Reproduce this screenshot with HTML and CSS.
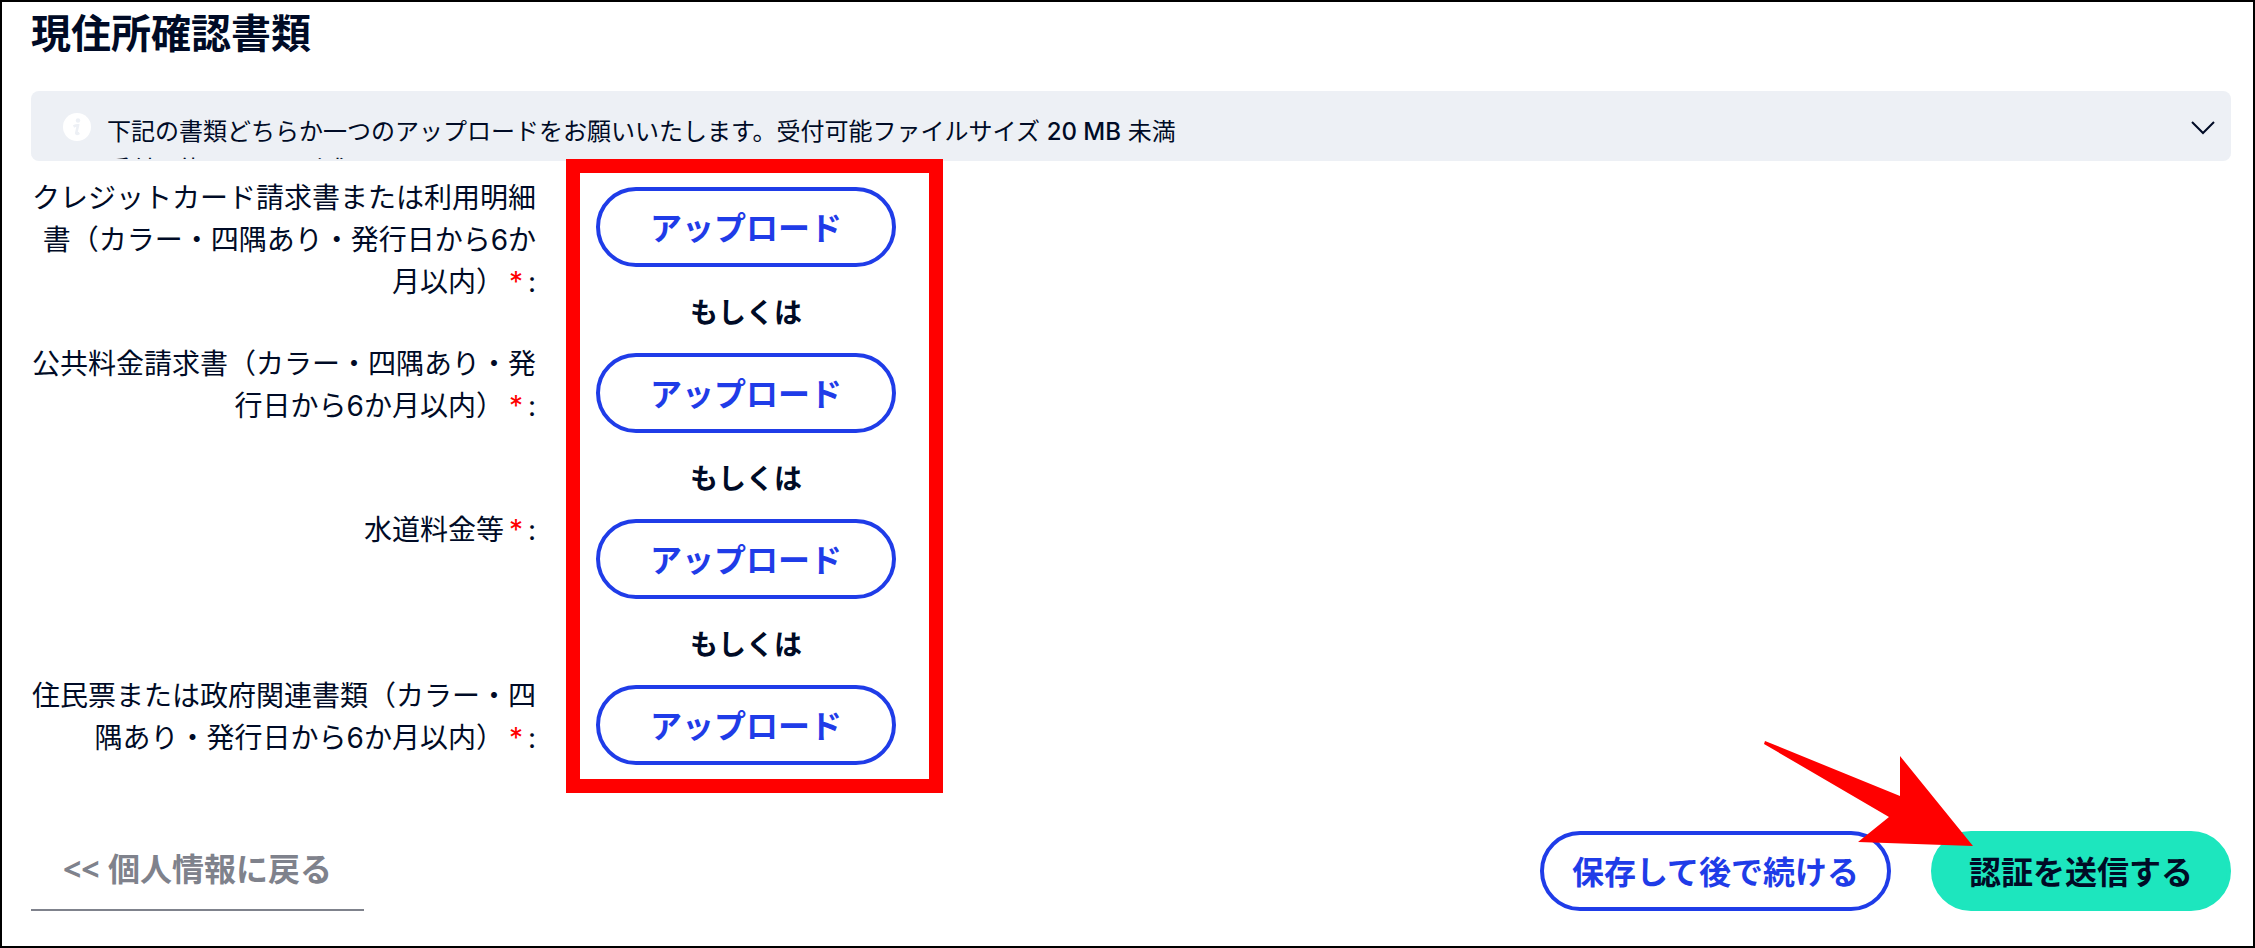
FILE: index.html
```html
<!DOCTYPE html>
<html lang="ja">
<head>
    <meta charset="UTF-8">
    <title>現住所確認書類</title>
    <link rel="stylesheet" href="styles.css">
</head>
<body>

<div class="container">
    <h1>現住所確認書類</h1>

    <div class="notice">
        <svg class="info-icon" viewBox="0 0 28 28" aria-hidden="true">
            <circle cx="14" cy="14" r="14" fill="#fff"/>
            <circle cx="15" cy="7.500" r="2.200" fill="#edf0f5"/>
            <path d="M10.500 13.500c2-1 3.500-1.300 4.500-1.200l-1.700 7.500c-.3 1.500 1 1.300 3 0" fill="none" stroke="#edf0f5" stroke-width="2.600"/>
        </svg>
        <div class="notice-text">
            下記の書類どちらか一つのアップロードをお願いいたします。受付可能ファイルサイズ <span class="size">20 MB</span> 未満<br>
            受付可能ファイル形式
        </div>
        <button class="toggle" type="button" aria-label="詳細を表示">
            <svg viewBox="0 0 24 14"><path d="M1 1l11 11L23 1"/></svg>
        </button>
    </div>

    <form class="documents">
        <div class="row">
            <label for="creditCard">クレジットカード請求書または利用明細書（カラー・四隅あり・発行日から6か月以内）<span class="required">*</span>:</label>
            <div class="upload">
                <button class="btn" type="button" id="creditCard">アップロード</button>
                <span class="or">もしくは</span>
            </div>
        </div>
        <div class="row">
            <label for="utilityBill">公共料金請求書（カラー・四隅あり・発行日から6か月以内）<span class="required">*</span>:</label>
            <div class="upload">
                <button class="btn" type="button" id="utilityBill">アップロード</button>
                <span class="or">もしくは</span>
            </div>
        </div>
        <div class="row">
            <label for="waterBill">水道料金等<span class="required">*</span>:</label>
            <div class="upload">
                <button class="btn" type="button" id="waterBill">アップロード</button>
                <span class="or">もしくは</span>
            </div>
        </div>
        <div class="row">
            <label for="residence">住民票または政府関連書類（カラー・四隅あり・発行日から6か月以内）<span class="required">*</span>:</label>
            <div class="upload">
                <button class="btn" type="button" id="residence">アップロード</button>
            </div>
        </div>
        <div class="highlight"></div>
    </form>

    <div class="actions">
        <a class="back" href="#">&lt;&lt; 個人情報に戻る</a>
        <div class="buttons">
            <button class="btn save" type="button">保存して後で続ける</button>
            <button class="btn submit" type="submit">認証を送信する</button>
            <svg class="arrow" viewBox="0 0 210 106" aria-hidden="true">
                <path d="M1 0L136 55V15L209 105L94 101L125 76L0 3z" fill="#f00"/>
            </svg>
        </div>
    </div>
</div>

</body>
</html>
```
FILE: styles.css
```css
* {
    box-sizing: border-box;
}
body {
    font-family: Inter, "Noto Sans CJK JP", sans-serif;
    font-size: 28px;
    line-height: 42px;
    color: #000b26;
    background: #fff;
    margin: 0;
}
.container {
    min-height: 100vh;
    padding: 2px 22px 0 29px;
    border: 2px solid #000;
}
h1 {
    margin: 0 0 27px;
    font-size: 40px;
    line-height: 60px;
}
button {
    font-family: inherit;
    color: inherit;
    cursor: pointer;
}

/* notice */
.notice {
    display: flex;
    align-items: flex-start;
    gap: 16px;
    height: 70px;
    padding: 22px 16px 0 32px;
    border-bottom: 2px solid #edf0f5;
    border-radius: 8px;
    background: #edf0f5;
    overflow: hidden;
}
.info-icon {
    flex: none;
    width: 28px;
    height: 28px;
}
.notice-text {
    flex: 1;
    font-size: 24px;
    line-height: 38px;
}
.size {
    font-weight: 500;
}
.toggle {
    display: flex;
    padding: 8px 0;
    border: none;
    background: none;
}
.toggle svg {
    width: 24px;
    height: 14px;
    fill: none;
    stroke: #000b26;
    stroke-width: 2;
}

/* documents */
.documents {
    position: relative;
    margin-top: 15px;
}
.row {
    display: flex;
    gap: 60px;
    height: 166px;
}
.row:nth-child(4) {
    height: 157px;
}
.row label {
    width: 505px;
    padding-top: 1px;
    text-align: right;
}
.required {
    margin: 0 5px;
    color: #f00;
}
.upload {
    display: flex;
    flex-direction: column;
    align-items: center;
    gap: 25px;
    padding-top: 11px;
}
.btn {
    min-width: 300px;
    height: 80px;
    padding: 0 28px 3px;
    border: 4px solid #1f3ce8;
    border-radius: 40px;
    background: #fff;
    color: #1f3ce8;
    font-size: 32px;
    font-weight: bold;
}
.or {
    font-weight: bold;
}
.highlight {
    position: absolute;
    top: -17px;
    left: 535px;
    width: 377px;
    height: 634px;
    border: 14px solid #f00;
    pointer-events: none;
}

/* actions */
.actions {
    display: flex;
    justify-content: space-between;
}
.back {
    height: 80px;
    padding: 0 32px;
    border-bottom: 2px solid #7f828c;
    color: #7f828c;
    font-family: "Open Sans", "Noto Sans CJK JP", sans-serif;
    font-size: 32px;
    font-weight: bold;
    line-height: 76px;
    text-decoration: none;
}
.buttons {
    position: relative;
    display: flex;
    gap: 40px;
}
.submit {
    border-color: #1de6be;
    background: #1de6be;
    color: #000b26;
}
.arrow {
    position: absolute;
    top: -90px;
    right: 257px;
    width: 210px;
    height: 106px;
}
```
